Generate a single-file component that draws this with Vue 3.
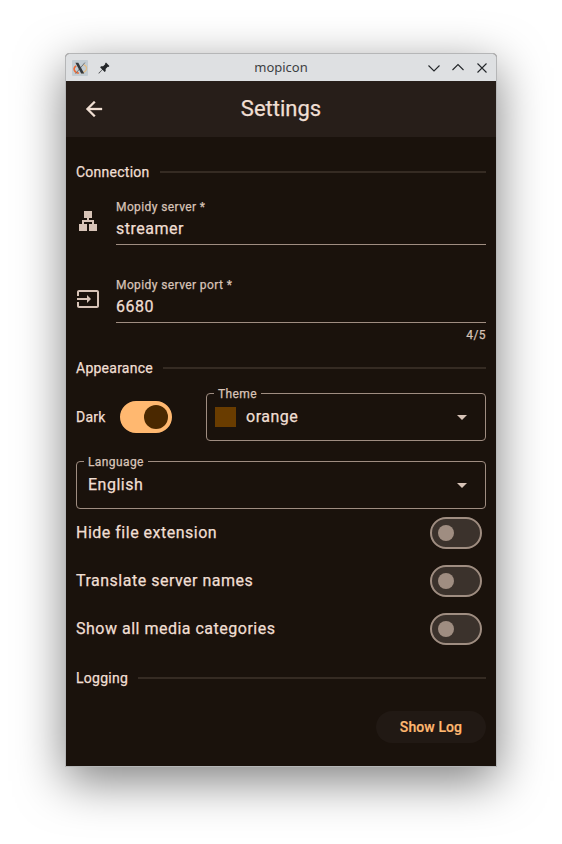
<script setup>
import { ref } from 'vue'

const server = ref('streamer')
const port = ref('6680')
const dark = ref(true)
const options = ref([
  { label: 'Hide file extension', on: false },
  { label: 'Translate server names', on: false },
  { label: 'Show all media categories', on: false },
])
</script>

<template>
  <div class="desktop">
    <div class="window">
      <div class="titlebar">
        <svg class="xlogo" viewBox="0 0 16 16" width="16" height="16">
          <rect width="16" height="16" rx="1" fill="#c3cdd3" />
          <path d="M11.500 4.600C16 6.500 15.600 11.400 9.600 13.200" fill="none" stroke="#e4bd84" stroke-width="1.2" />
          <path d="M4.200 5.800C.8 8 1.400 12.200 6.800 13.300" fill="none" stroke="#ee6a35" stroke-width="1.500" />
          <path d="M12.900 2.600L3.600 13.600" stroke="#70767b" stroke-width="1" />
          <path d="M3.400 2.800h2.900l5.900 10.600H9.200z" fill="#33383c" />
        </svg>
        <svg class="pin" viewBox="0 0 12 12" width="12" height="12">
          <path d="M8 .6L11.400 4l-.9.9-.8-.1-2.100 2.100.1 2-1 1L4.500 7.700 1 11.400.5 11.500.6 11 4.200 7.400 2.100 5.200l1-1 2 .1 2.100-2.100L7.100 1.500z" fill="#232629" />
        </svg>
        <span class="caption">mopicon</span>
        <svg class="controls" viewBox="0 0 60 12" width="60" height="12">
          <g fill="none" stroke="#232629" stroke-width="1.100">
            <path d="M.5 3.500L6 9l5.500-5.500" />
            <path d="M24.500 8L30 2.500 35.500 8" />
            <path d="M49.500 1.500l9 9M58.500 1.500l-9 9" />
          </g>
        </svg>
      </div>

      <header class="appbar">
        <svg class="back" viewBox="0 0 24 24" width="24" height="24">
          <path d="M20 11H7.830l5.590-5.590L12 4l-8 8 8 8 1.410-1.410L7.830 13H20z" fill="#f0dfd3" stroke="#f0dfd3" stroke-width=".3" />
        </svg>
        <h1>Settings</h1>
      </header>

      <main>
        <div class="section"><span>Connection</span><i></i></div>

        <div class="field">
          <svg class="lead" viewBox="0 0 24 24" width="24" height="24">
            <path d="M13 22h8v-7h-3v-4h-5V9h3V2H8v7h3v2H6v4H3v7h8v-7H8v-2h8v2h-3z" fill="#d7c3b7" />
          </svg>
          <div class="input">
            <label>Mopidy server *</label>
            <div class="value">{{ server }}</div>
          </div>
        </div>

        <div class="field second">
          <svg class="lead" viewBox="0 0 24 24" width="24" height="24">
            <path d="M21 3.010H3c-1.100 0-2 .9-2 2V9h2V4.990h18v14.030H3V15H1v4.010c0 1.100.9 1.980 2 1.980h18c1.100 0 2-.88 2-1.980v-14c0-1.110-.9-2-2-2zM11 16l4-4-4-4v3H1v2h10v3z" fill="#d7c3b7" />
          </svg>
          <div class="input">
            <label>Mopidy server port *</label>
            <div class="value">{{ port }}</div>
          </div>
        </div>
        <div class="counter">{{ port.length }}/5</div>

        <div class="section appearance"><span>Appearance</span><i></i></div>

        <div class="themerow">
          <span class="dark">Dark</span>
          <div class="switch" :class="{ on: dark }" @click="dark = !dark"><b></b></div>
          <fieldset class="select theme">
            <legend>Theme</legend>
            <div class="choice">
              <em class="swatch"></em><span>orange</span>
              <svg viewBox="0 0 10 5" width="10" height="5"><path d="M0 0h10L5 5z" fill="#d7c3b7" /></svg>
            </div>
          </fieldset>
        </div>

        <fieldset class="select language">
          <legend>Language</legend>
          <div class="choice">
            <span>English</span>
            <svg viewBox="0 0 10 5" width="10" height="5"><path d="M0 0h10L5 5z" fill="#d7c3b7" /></svg>
          </div>
        </fieldset>

        <div v-for="o in options" :key="o.label" class="option">
          <span>{{ o.label }}</span>
          <div class="switch" :class="{ on: o.on }" @click="o.on = !o.on"><b></b></div>
        </div>

        <div class="section logging"><span>Logging</span><i></i></div>

        <div class="actions"><button>Show Log</button></div>
      </main>
    </div>
  </div>
</template>

<style>
body {
  background: #fff;
}
</style>

<style scoped>
* {
  box-sizing: border-box;
}
svg {
  display: block;
  flex: none;
}
.desktop {
  width: 562px;
  height: 844px;
  padding: 53px 65px 77px;
  overflow: hidden;
  font-family: Roboto, sans-serif;
  color: #f0dfd3;
}
.window {
  width: 432px;
  height: 714px;
  border: 1px solid #b5b6b7;
  border-radius: 4px 4px 0 0;
  background: #1a120c;
  box-shadow: 0 14px 48px rgba(0, 0, 0, 0.5);
}
.titlebar {
  display: grid;
  grid-template-columns: 16px 12px 1fr 60px;
  align-items: center;
  height: 27px;
  padding: 0 8px 0 6px;
  background: #dee0e2;
  border-radius: 3px 3px 0 0;
}
.titlebar .pin {
  margin-left: 10px;
}
.caption {
  padding-left: 34px;
  text-align: center;
  font: 13px/27px 'Noto Sans', sans-serif;
  color: #3c3f42;
}
.appbar {
  display: grid;
  grid-template-columns: 24px 1fr 24px;
  align-items: center;
  height: 56px;
  padding: 0 16px;
  background: #271e19;
}
h1 {
  margin: 0;
  text-align: center;
  font-size: 22px;
  font-weight: 400;
  line-height: 28px;
  -webkit-text-stroke: 0.25px;
}
main {
  padding: 25px 10px 0;
  -webkit-text-stroke: 0.25px;
}
.section {
  display: flex;
  align-items: center;
  gap: 10px;
  height: 20px;
  font-size: 14px;
  letter-spacing: 0.25px;
}
.section i {
  flex: 1;
  height: 2px;
  background: #352b23;
}
.field {
  display: flex;
  gap: 16px;
  height: 48px;
  margin-top: 15px;
}
.field.second {
  margin-top: 30px;
}
.lead {
  margin-top: 12px;
}
.input {
  flex: 1;
  border-bottom: 1px solid #9f8d81;
}
label {
  display: block;
  padding-top: 2px;
  font-size: 12px;
  line-height: 16px;
  letter-spacing: 0.4px;
  color: #d7c3b7;
}
.value {
  margin-top: 2px;
  font-size: 16px;
  line-height: 24px;
  letter-spacing: 0.5px;
}
.counter {
  padding-top: 4px;
  text-align: right;
  font-size: 12px;
  line-height: 16px;
  letter-spacing: 0.4px;
  color: #d7c3b7;
}
.appearance {
  margin-top: 15px;
}
.themerow {
  display: flex;
  align-items: center;
  height: 48px;
  margin-top: 15px;
}
.dark {
  width: 44px;
  font-size: 14px;
  letter-spacing: 0.25px;
}
.switch {
  display: flex;
  align-items: center;
  width: 52px;
  height: 32px;
  padding-left: 6px;
  border: 2px solid #9f8d81;
  border-radius: 16px;
  background: #3b322c;
}
.switch b {
  width: 16px;
  height: 16px;
  border-radius: 50%;
  background: #9f8d81;
}
.switch.on {
  padding-left: 22px;
  border-color: #ffb870;
  background: #ffb870;
}
.switch.on b {
  width: 24px;
  height: 24px;
  background: #4a2800;
}
.select {
  min-width: 0;
  height: 56px;
  margin: -8px 0 0;
  padding: 0 18px 0 8px;
  border: 1px solid #9f8d81;
  border-radius: 4px;
}
.select legend {
  height: 16px;
  margin-left: -1px;
  padding: 0 4px;
  font-size: 12px;
  line-height: 18px;
  letter-spacing: 0.4px;
  color: #d7c3b7;
}
.choice {
  display: flex;
  align-items: center;
  height: 31px;
  font-size: 16px;
  letter-spacing: 0.5px;
}
.choice svg {
  margin: 1px 0 0 auto;
}
.theme {
  width: 280px;
  margin-left: 34px;
}
.swatch {
  width: 21px;
  height: 20px;
  margin-right: 10px;
  background: #693c00;
}
.language {
  margin-top: 12px;
}
.language .choice {
  padding-left: 3px;
}
.option {
  display: flex;
  align-items: center;
  justify-content: space-between;
  height: 48px;
  padding-right: 4px;
  font-size: 16px;
  letter-spacing: 0.5px;
}
.option span {
  padding-bottom: 2px;
}
.logging {
  margin-top: 15px;
}
.actions {
  display: flex;
  justify-content: flex-end;
  margin-top: 23px;
}
button {
  width: 110px;
  height: 32px;
  padding: 0;
  border: 0;
  border-radius: 16px;
  background: #211914;
  color: #ffb870;
  font: 500 14px Roboto, sans-serif;
  letter-spacing: 0.1px;
  -webkit-text-stroke: 0.2px;
}
</style>
